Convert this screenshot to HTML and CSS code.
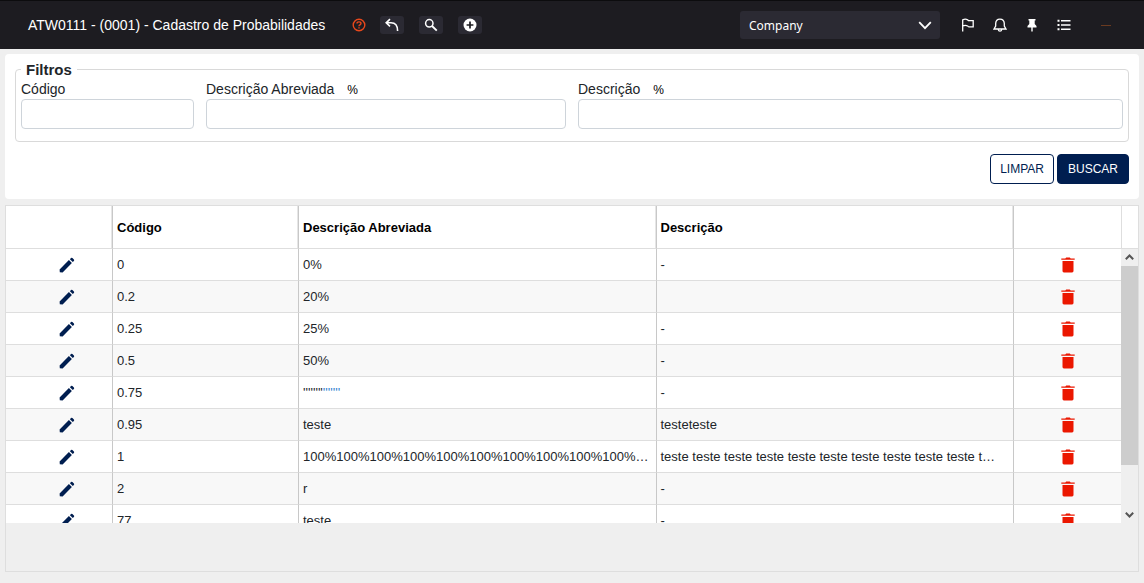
FILE: index.html
```
<!DOCTYPE html>
<html lang="pt-BR">
<head>
<meta charset="utf-8">
<title>Cadastro de Probabilidades</title>
<link rel="stylesheet" href="styles.css">
</head>
<body>
<svg class="sprite" aria-hidden="true">
  <symbol id="pencil" viewBox="0 0 16 16"><path d="M.8 15.2.6 12.4 9.9 3.1l3 3-9.3 9.3zM10.9 2.2l1.1-1.1q.7-.6 1.4 0l1.5 1.5q.6.7 0 1.4l-1.1 1.1z"/></symbol>
  <symbol id="trash" viewBox="0 0 14 16"><path d="M.3 1.6h4L5.2.6h3.6l.9 1h4v1.1H.3zM1.5 4h11v10q0 1.4-1.4 1.4H2.9q-1.4 0-1.4-1.4z"/></symbol>
</svg>
<header class="topbar">
  <h1 class="title">ATW0111 - (0001) - Cadastro de Probabilidades</h1>
  <button class="help" aria-label="Ajuda"><svg width="14" height="14" viewBox="0 0 14 14" fill="none" stroke="currentColor" stroke-width="1.4"><circle cx="7" cy="7" r="5.8"/><path d="M5 5.6Q5 3.9 7 3.9T9 5.5Q9 6.3 8 6.8T7 8.2M7 9.2v1.4"/></svg></button>
  <div class="tools">
    <button class="tool" aria-label="Voltar"><svg width="16" height="16" viewBox="0 0 16 16" fill="none" stroke="currentColor" stroke-width="1.6"><path d="M6 2.2 2.2 5.8 6 9.4M2.4 5.8H7q6.6 0 6.6 8.2"/></svg></button>
    <button class="tool" aria-label="Pesquisar"><svg width="14" height="14" viewBox="0 0 14 14" fill="none" stroke="currentColor"><circle cx="5.3" cy="5.3" r="3.7" stroke-width="1.5"/><path d="m8 8 4.8 4.6" stroke-width="1.9"/></svg></button>
    <button class="tool" aria-label="Adicionar"><svg width="14" height="14" viewBox="0 0 14 14"><circle cx="7" cy="7" r="6.5" fill="#fff"/><path d="M7 3.6v6.8M3.6 7h6.8" stroke="#1d1c21" stroke-width="1.7"/></svg></button>
  </div>
  <div class="company">
    <select class="company-select" aria-label="Empresa"><option>Company</option></select>
    <svg class="chevron" width="14" height="9" viewBox="0 0 14 9" fill="none" stroke="#fff" stroke-width="1.8"><path d="m1.2 1.2 5.8 6 5.8-6"/></svg>
  </div>
  <nav class="actions">
    <button class="action" aria-label="Marcar"><svg width="14" height="14" viewBox="0 0 14 14" fill="none" stroke="currentColor" stroke-width="1.3"><path d="M1.7 13.5V1.8q2.6-1.2 5 0 .6.9 1.6.9h3.9V8.9H8.3q-1 0-1.6-.9-2.4-1.2-5 0"/></svg></button>
    <button class="action" aria-label="Notificações"><svg width="14" height="14" viewBox="0 0 14 14" fill="none" stroke="currentColor" stroke-width="1.3"><path d="M1 11h12L11.3 8V5.4Q11 1.2 7 1.1T2.7 5.4V8zM5.2 11.5q.3 1.7 1.8 1.7t1.8-1.7"/></svg></button>
    <button class="action" aria-label="Fixar"><svg width="14" height="14" viewBox="0 0 14 14" fill="currentColor"><path d="M3.5 1h7v1.6h-.8V6l1.8 2v1.4H7.7v4H6.3v-4H2.5V8l1.8-2V2.6h-.8z"/></svg></button>
    <button class="action" aria-label="Menu"><svg width="14" height="14" viewBox="0 0 14 14" fill="currentColor"><path d="M.5 1.7h2v2h-2zM.5 6h2v2h-2zM.5 10.3h2v2h-2zM4 1.9h9.5v1.5H4zM4 6.2h9.5v1.5H4zM4 10.5h9.5V12H4z"/></svg></button>
    <span class="dash"></span>
  </nav>
</header>
<main class="page">
  <form class="card">
    <fieldset class="filters">
      <legend>Filtros</legend>
      <div class="field code"><label for="codigo">Código</label><input id="codigo" type="text"></div>
      <div class="field short"><label for="abrev">Descrição Abreviada <span class="wild">%</span></label><input id="abrev" type="text"></div>
      <div class="field long"><label for="desc">Descrição <span class="wild">%</span></label><input id="desc" type="text"></div>
    </fieldset>
    <div class="buttons">
      <button type="reset" class="btn">LIMPAR</button>
      <button type="button" class="btn primary">BUSCAR</button>
    </div>
  </form>
  <section class="grid">
    <div class="viewport">
      <div class="rows">
      <table>
        <colgroup><col class="icon-col"><col class="code-col"><col><col><col class="icon-col"></colgroup>
        <thead><tr><th></th><th>Código</th><th>Descrição Abreviada</th><th>Descrição</th><th></th></tr></thead>
        <tbody>
          <tr><td><button class="row-btn" aria-label="Editar"><svg class="pencil"><use href="#pencil"/></svg></button></td><td>0</td><td>0%</td><td>-</td><td><button class="row-btn" aria-label="Excluir"><svg class="trash"><use href="#trash"/></svg></button></td></tr>
          <tr><td><button class="row-btn" aria-label="Editar"><svg class="pencil"><use href="#pencil"/></svg></button></td><td>0.2</td><td>20%</td><td></td><td><button class="row-btn" aria-label="Excluir"><svg class="trash"><use href="#trash"/></svg></button></td></tr>
          <tr><td><button class="row-btn" aria-label="Editar"><svg class="pencil"><use href="#pencil"/></svg></button></td><td>0.25</td><td>25%</td><td>-</td><td><button class="row-btn" aria-label="Excluir"><svg class="trash"><use href="#trash"/></svg></button></td></tr>
          <tr><td><button class="row-btn" aria-label="Editar"><svg class="pencil"><use href="#pencil"/></svg></button></td><td>0.5</td><td>50%</td><td>-</td><td><button class="row-btn" aria-label="Excluir"><svg class="trash"><use href="#trash"/></svg></button></td></tr>
          <tr><td><button class="row-btn" aria-label="Editar"><svg class="pencil"><use href="#pencil"/></svg></button></td><td>0.75</td><td>''''''''<span class="blue">'''''''</span></td><td>-</td><td><button class="row-btn" aria-label="Excluir"><svg class="trash"><use href="#trash"/></svg></button></td></tr>
          <tr><td><button class="row-btn" aria-label="Editar"><svg class="pencil"><use href="#pencil"/></svg></button></td><td>0.95</td><td>teste</td><td>testeteste</td><td><button class="row-btn" aria-label="Excluir"><svg class="trash"><use href="#trash"/></svg></button></td></tr>
          <tr><td><button class="row-btn" aria-label="Editar"><svg class="pencil"><use href="#pencil"/></svg></button></td><td>1</td><td>100%100%100%100%100%100%100%100%100%100%100%</td><td>teste teste teste teste teste teste teste teste teste teste teste</td><td><button class="row-btn" aria-label="Excluir"><svg class="trash"><use href="#trash"/></svg></button></td></tr>
          <tr><td><button class="row-btn" aria-label="Editar"><svg class="pencil"><use href="#pencil"/></svg></button></td><td>2</td><td>r</td><td>-</td><td><button class="row-btn" aria-label="Excluir"><svg class="trash"><use href="#trash"/></svg></button></td></tr>
          <tr><td><button class="row-btn" aria-label="Editar"><svg class="pencil"><use href="#pencil"/></svg></button></td><td>77</td><td>teste</td><td>-</td><td><button class="row-btn" aria-label="Excluir"><svg class="trash"><use href="#trash"/></svg></button></td></tr>
        </tbody>
      </table>
      </div>
      <div class="side">
        <div class="side-head"></div>
        <div class="scrollbar">
          <svg class="arrow" viewBox="0 0 17 17"><path d="m4.8 10.2 3.7-3.7 3.7 3.7"/></svg>
          <div class="track"><div class="thumb"></div></div>
          <svg class="arrow" viewBox="0 0 17 17"><path d="m4.8 6.8 3.7 3.7 3.7-3.7"/></svg>
        </div>
      </div>
    </div>
  </section>
</main>
</body>
</html>
```
FILE: styles.css
```
* { box-sizing: border-box; }
body {
  margin: 0;
  height: 100vh;
  display: flex;
  flex-direction: column;
  background: #efefef;
  color: #212529;
  font: 14px "Liberation Sans", Arial, sans-serif;
}
button, input, select { font: inherit; margin: 0; }
.sprite { display: none; }

.topbar {
  height: 49px;
  flex: none;
  display: flex;
  align-items: center;
  padding: 0 33px 0 28px;
  background: #1d1c21;
  border-top: 1px solid #0c0c0e;
  color: #fff;
}
.title { margin: 0; font-size: 14px; font-weight: 400; white-space: nowrap; }
.help, .action, .row-btn {
  display: flex;
  padding: 0;
  border: 0;
  background: none;
  color: inherit;
}
.help { margin-left: 27px; color: #e8481c; }
.tools { display: flex; gap: 15px; margin-left: 14px; }
.tool {
  width: 24px;
  height: 18px;
  display: flex;
  align-items: center;
  justify-content: center;
  padding: 0;
  border: 0;
  border-radius: 3px;
  background: #2b2a33;
  color: #fff;
}
.company { position: relative; width: 200px; margin-left: auto; }
.company-select {
  width: 100%;
  height: 28px;
  padding: 0 9px;
  border: 0;
  border-radius: 3px;
  appearance: none;
  background: #2b2a33;
  color: #fff;
  font: 12px "Noto Sans", sans-serif;
}
.chevron { position: absolute; right: 8px; top: 10px; pointer-events: none; }
.actions { display: flex; align-items: center; gap: 18px; margin-left: 21px; }
.dash { width: 10px; height: 1px; margin-left: 12px; background: #6a3a20; }

.page { flex: 1; min-height: 0; display: flex; flex-direction: column; gap: 6px; padding: 5px 5px 11px; }
.card { flex: none; padding: 7px 10px 15px; border-radius: 4px; background: #fff; }
.filters {
  min-width: 0;
  display: flex;
  gap: 12px;
  margin: 0;
  padding: 3px 5px 12px;
  border: 1px solid #d9d9d9;
  border-radius: 4px;
}
.filters legend { padding: 0 5px; font-size: 15px; font-weight: 700; line-height: 17px; }
.field { min-width: 0; display: flex; flex-direction: column; gap: 1px; }
.code { flex: 173; }
.short { flex: 360; }
.long { flex: 545; }
.field label { height: 17px; line-height: 17px; }
.wild { margin-left: 9px; font-size: 12px; color: #000; }
.field input { width: 100%; height: 30px; padding: 4px 8px; border: 1px solid #ced4da; border-radius: 4px; background: #fff; }
.buttons { display: flex; justify-content: flex-end; gap: 3px; margin-top: 12px; }
.btn {
  height: 30px;
  padding: 0 9px;
  border: 1px solid #001e50;
  border-radius: 4px;
  background: #fff;
  color: #001e50;
  font-size: 12px;
}
.primary { padding: 0 10px; background: #001e50; color: #fff; }

.grid { flex: 1; min-height: 0; display: flex; border: 1px solid #dedede; padding-bottom: 48px; }
.viewport { flex: 1; min-width: 0; display: flex; overflow: hidden; }
.rows { flex: 1; min-width: 0; overflow: hidden; background: #fff; }
table { width: 100%; table-layout: fixed; border-collapse: separate; border-spacing: 0; font-size: 13px; }
.icon-col { width: 107px; }
.code-col { width: 186px; }
th, td {
  padding: 0 4px;
  border-right: 1px solid #c8c8c8;
  border-bottom: 1px solid #dedede;
  text-align: left;
  overflow: hidden;
  white-space: nowrap;
  text-overflow: ellipsis;
}
th { height: 43px; color: #000; box-shadow: inset -1px 0 #e6e6e6; }
td { height: 32px; }
th:last-child, td:last-child { border-right: 0; box-shadow: none; }
td:nth-child(4) { padding-right: 14px; }
tbody tr:nth-child(even) { background: #f8f8f8; }
.blue { color: #2f7fd0; }
.row-btn { margin: 0 auto; }
td:first-child { padding-left: 20px; }
.pencil { width: 16px; height: 16px; fill: #001e50; }
.trash { width: 14px; height: 16px; fill: #eb1700; }
.side { width: 17px; flex: none; display: flex; flex-direction: column; }
.side-head { height: 43px; flex: none; background: #fff; border-left: 1px solid #dedede; border-bottom: 1px solid #dedede; }
.scrollbar { flex: 1; min-height: 0; display: flex; flex-direction: column; }
.arrow { width: 17px; height: 17px; flex: none; fill: none; stroke: #555; stroke-width: 2; }
.track { flex: 1; }
.thumb { height: 83%; background: #cdcdcd; }
```
